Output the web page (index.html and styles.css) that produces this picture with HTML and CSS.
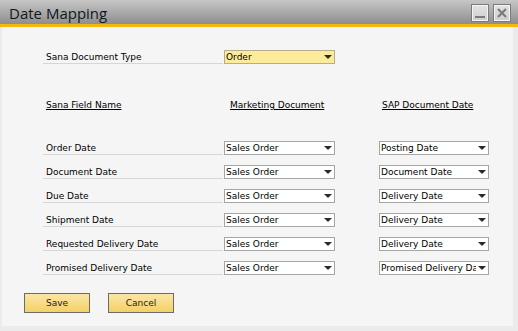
FILE: index.html
```html
<!DOCTYPE html>
<html lang="en">
<head>
<meta charset="UTF-8">
<title>Date Mapping</title>
<link rel="stylesheet" href="styles.css">
</head>
<body>

<div class="window">
  <div class="titlebar">
    <span class="title">Date Mapping</span>
    <div class="win-btns">
      <span class="win-btn"><svg width="12" height="12" viewBox="0 0 12 12"><rect x="1" y="9" width="10" height="2" fill="#7b7b7b"/></svg></span>
      <span class="win-btn"><svg width="12" height="12" viewBox="0 0 12 12"><path d="M2 2 L10 10 M10 2 L2 10" stroke="#7b7b7b" stroke-width="2.2"/></svg></span>
    </div>
  </div>

  <div class="content">
    <div class="row type-row">
      <div class="label">Sana Document Type</div>
      <div class="combo yellow">Order<span class="arrow"></span></div>
    </div>

    <div class="row head-row">
      <div class="head head-label">Sana Field Name</div>
      <div class="head head-mid">Marketing Document</div>
      <div class="head">SAP Document Date</div>
    </div>

    <div class="rows">
      <div class="row">
        <div class="label">Order Date</div>
        <div class="combo">Sales Order<span class="arrow"></span></div>
        <div class="combo right">Posting Date<span class="arrow"></span></div>
      </div>
      <div class="row">
        <div class="label">Document Date</div>
        <div class="combo">Sales Order<span class="arrow"></span></div>
        <div class="combo right">Document Date<span class="arrow"></span></div>
      </div>
      <div class="row">
        <div class="label">Due Date</div>
        <div class="combo">Sales Order<span class="arrow"></span></div>
        <div class="combo right">Delivery Date<span class="arrow"></span></div>
      </div>
      <div class="row">
        <div class="label">Shipment Date</div>
        <div class="combo">Sales Order<span class="arrow"></span></div>
        <div class="combo right">Delivery Date<span class="arrow"></span></div>
      </div>
      <div class="row">
        <div class="label">Requested Delivery Date</div>
        <div class="combo">Sales Order<span class="arrow"></span></div>
        <div class="combo right">Delivery Date<span class="arrow"></span></div>
      </div>
      <div class="row">
        <div class="label">Promised Delivery Date</div>
        <div class="combo">Sales Order<span class="arrow"></span></div>
        <div class="combo right">Promised Delivery Date<span class="arrow"></span></div>
      </div>
    </div>

    <div class="btn-group">
      <button class="btn">Save</button>
      <button class="btn">Cancel</button>
    </div>
  </div>
</div>

</body>
</html>
```

FILE: styles.css
```css
body {
  margin: 0;
  padding: 0;
  font-family: "DejaVu Sans", Tahoma, sans-serif;
  font-size: 9px;
  color: #000;
  background-color: #ececec;
}
.window {
  width: 518px;
  height: 331px;
  background-color: #ebebeb;
  display: flex;
  flex-direction: column;
}
.titlebar {
  height: 24px;
  background: linear-gradient(#c6c6c6, #8e8e8e);
  border-bottom: 3px solid #f6b70f;
  display: flex;
  align-items: center;
  justify-content: space-between;
}
.title {
  font-family: "Open Sans", sans-serif;
  font-size: 15px;
  color: #101820;
  padding-left: 9px;
  padding-top: 1px;
}
.win-btns {
  display: flex;
  gap: 4px;
  padding-right: 7px;
  padding-top: 1px;
}
.win-btn {
  width: 16px;
  height: 16px;
  border: 1px solid #7a7a7a;
  box-shadow: inset 0 0 0 1px #f4f4f4;
  background: linear-gradient(#e2e2e2, #cfcfcf);
  display: flex;
  align-items: center;
  justify-content: center;
}
.content {
  flex: 1;
  margin: 0 5px 5px 2px;
  background-color: #f5f5f5;
  padding: 23px 0 0 41px;
}
.row {
  display: flex;
  align-items: flex-start;
  height: 14px;
}
.label {
  width: 177px;
  height: 12px;
  padding-top: 1px;
  padding-left: 3px;
  border-bottom: 1px solid #d6d6d6;
  line-height: 12px;
}
.combo {
  position: relative;
  width: 108px;
  height: 12px;
  border: 1px solid #a5a5a5;
  background-color: #fff;
  line-height: 12px;
  padding-left: 1px;
  white-space: nowrap;
  overflow: hidden;
  margin-left: 1px;
}
.combo.yellow {
  background-color: #fdeb9c;
  border-color: #b7ad8c;
}
.combo.right {
  width: 107px;
  margin-left: 44px;
}
.arrow {
  position: absolute;
  right: 0;
  top: 0;
  width: 12px;
  height: 12px;
}
.arrow::after {
  content: "";
  position: absolute;
  left: 2px;
  top: 4px;
  border-left: 4px solid transparent;
  border-right: 4px solid transparent;
  border-top: 4px solid #2a2a2a;
}
.combo .arrow {
  background-color: #fff;
}
.combo.yellow .arrow {
  background-color: #fdeb9c;
}
.head-row {
  margin-top: 34px;
  align-items: center;
}
.head {
  text-decoration: underline;
  line-height: 12px;
}
.head-label {
  width: 184px;
  padding-left: 3px;
}
.head-mid {
  width: 152px;
}
.rows {
  margin-top: 29px;
  display: flex;
  flex-direction: column;
  gap: 10px;
}
.btn-group {
  margin-top: 18px;
  margin-left: -19px;
  display: flex;
  gap: 18px;
}
.btn {
  width: 66px;
  height: 20px;
  padding: 0;
  font-family: "DejaVu Sans", Tahoma, sans-serif;
  font-size: 9px;
  color: #222;
  border: 1px solid #6b6b6b;
  background: linear-gradient(#fbe6a8, #f4d064);
}
```
